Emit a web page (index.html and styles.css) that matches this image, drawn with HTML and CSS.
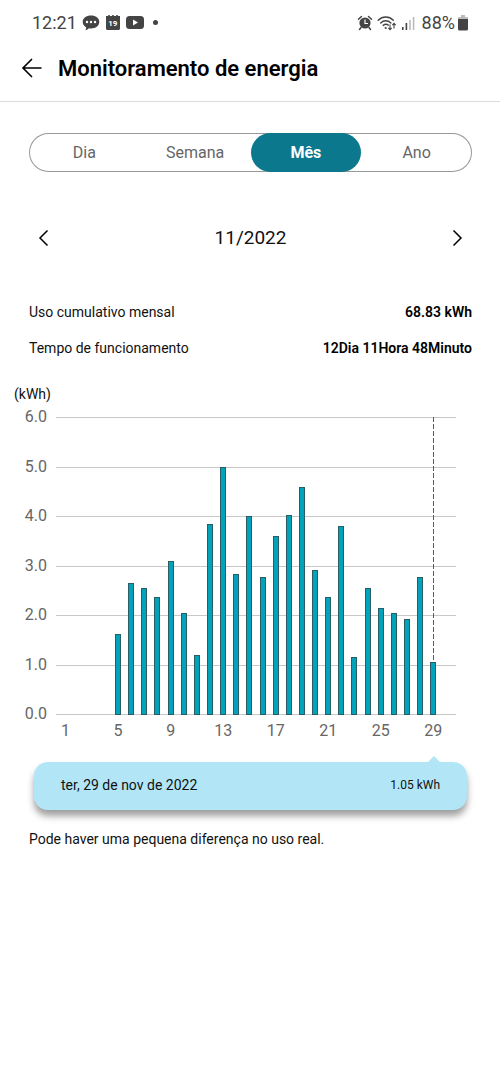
FILE: index.html
```html
<!DOCTYPE html>
<html lang="pt-BR">
<head>
    <meta charset="UTF-8">
    <meta name="viewport" content="width=device-width, initial-scale=1.0">
    <title>Monitoramento de energia</title>
    <link rel="stylesheet" href="styles.css">
</head>
<body>
    <div class="status-bar">
        <div class="status-left">
            <span>12:21</span>
            <svg width="18" height="18" viewBox="0 0 18 18">
                <path d="M9 1.500c4.700 0 8.300 2.700 8.300 6.400s-3.600 6.500-8.300 6.500c-.8 0-1.500-.1-2.200-.2-.8 1-2 1.700-3.300 2 .5-.9.7-1.900.6-2.900C2 12.100.7 10.100.7 7.900.7 4.200 4.300 1.500 9 1.500z" fill="#444"/>
                <circle cx="5" cy="8" r="1.200" fill="#fff"/>
                <circle cx="9" cy="8" r="1.200" fill="#fff"/>
                <circle cx="13" cy="8" r="1.200" fill="#fff"/>
            </svg>
            <span class="calendar">
                <svg width="16" height="18" viewBox="0 0 16 18">
                    <path d="M1 3.500V2h2.200V1h1.600v1h2.400V1h1.600v1h2.400V1h1.600v1H15v12.500a1.500 1.500 0 0 1-1.500 1.500h-11A1.500 1.500 0 0 1 1 14.500z" fill="#444"/>
                </svg>
                <span class="calendar-day">19</span>
            </span>
            <svg width="18" height="18" viewBox="0 0 18 18">
                <rect x="0" y="2" width="18" height="13" rx="3.500" fill="#444"/>
                <path d="M7 5.500l5 3-5 3z" fill="#fff"/>
            </svg>
            <span class="dot"></span>
        </div>
        <div class="status-right">
            <svg width="16" height="18" viewBox="0 0 16 18">
                <circle cx="8" cy="9" r="5.600" fill="#444"/>
                <path d="M1.500 5.200L4.500 2.500M14.500 5.200l-3-2.700M4 13.500L2.500 15.500M12 13.500l1.500 2" stroke="#444" stroke-width="1.500" stroke-linecap="round" fill="none"/>
                <path d="M8 5.500v4h3" stroke="#fff" stroke-width="1.200" fill="none"/>
            </svg>
            <svg width="20" height="18" viewBox="0 0 20 18">
                <g stroke="#444" stroke-width="1.400" stroke-linecap="round" fill="none">
                    <path d="M1.200 6.200c4.300-4.300 10.800-4.300 15.100 0"/>
                    <path d="M3.700 8.900c3-2.900 7.200-2.900 10.200 0"/>
                    <path d="M6.200 11.400c1.600-1.400 3.500-1.500 5.100-.3"/>
                </g>
                <circle cx="8.700" cy="14" r="1.100" fill="#444"/>
                <path d="M13 10.500v5M11.300 13.900l1.700 1.900 1.700-1.900M17 14.500v-5M15.300 11.200L17 9.300l1.700 1.900" stroke="#444" stroke-width="1.100" fill="none"/>
            </svg>
            <svg width="14" height="18" viewBox="0 0 14 18">
                <rect x="1" y="13" width="1.600" height="3" fill="#444"/>
                <rect x="4.600" y="9" width="1.600" height="7" fill="#444"/>
                <rect x="8.200" y="6" width="1.600" height="10" fill="#bbb"/>
                <rect x="11.800" y="3" width="1.600" height="13" fill="#bbb"/>
            </svg>
            <span class="battery-level">88%</span>
            <svg width="12" height="18" viewBox="0 0 12 18">
                <path d="M4 1h4v2h2a1 1 0 0 1 1 1v3H1V4a1 1 0 0 1 1-1h2z" fill="#bbb"/>
                <path d="M1 5h10v10a1.500 1.500 0 0 1-1.500 1.500h-7A1.500 1.500 0 0 1 1 15z" fill="#444"/>
            </svg>
        </div>
    </div>

    <header class="header">
        <button class="icon-button" aria-label="Voltar">
            <svg width="22" height="20" viewBox="0 0 22 20">
                <path d="M20.500 10H2M11 1L2 10l9 9" stroke="#000" stroke-width="1.600" fill="none"/>
            </svg>
        </button>
        <h1>Monitoramento de energia</h1>
    </header>

    <main>
        <nav class="tabs">
            <button class="tab">Dia</button>
            <button class="tab">Semana</button>
            <button class="tab active">Mês</button>
            <button class="tab">Ano</button>
        </nav>

        <div class="period">
            <button class="icon-button" aria-label="Mês anterior">
                <svg width="12" height="18" viewBox="0 0 12 18">
                    <path d="M10.500 1.500L3 9l7.500 7.500" stroke="#000" stroke-width="1.500" fill="none"/>
                </svg>
            </button>
            <span>11/2022</span>
            <button class="icon-button" aria-label="Próximo mês">
                <svg width="12" height="18" viewBox="0 0 12 18">
                    <path d="M1.500 1.500L9 9l-7.500 7.500" stroke="#000" stroke-width="1.500" fill="none"/>
                </svg>
            </button>
        </div>

        <dl class="summary">
            <div class="summary-row">
                <dt>Uso cumulativo mensal</dt>
                <dd>68.83 kWh</dd>
            </div>
            <div class="summary-row">
                <dt>Tempo de funcionamento</dt>
                <dd>12Dia 11Hora 48Minuto</dd>
            </div>
        </dl>

        <section class="chart">
            <div class="unit">(kWh)</div>
            <div class="chart-body">
                <div class="y-axis">
                    <span>6.0</span>
                    <span>5.0</span>
                    <span>4.0</span>
                    <span>3.0</span>
                    <span>2.0</span>
                    <span>1.0</span>
                    <span>0.0</span>
                </div>
                <div class="plot">
                    <div class="lines">
                        <i></i><i></i><i></i><i></i><i></i><i></i><i></i>
                    </div>
                    <!-- one column per day of the month -->
                    <div class="bars">
                        <div class="day"></div>
                        <div class="day"></div>
                        <div class="day"></div>
                        <div class="day"></div>
                        <div class="day"><div class="bar" style="height: 27.2%"></div></div>
                        <div class="day"><div class="bar" style="height: 44.3%"></div></div>
                        <div class="day"><div class="bar" style="height: 42.5%"></div></div>
                        <div class="day"><div class="bar" style="height: 39.5%"></div></div>
                        <div class="day"><div class="bar" style="height: 51.6%"></div></div>
                        <div class="day"><div class="bar" style="height: 34.3%"></div></div>
                        <div class="day"><div class="bar" style="height: 20%"></div></div>
                        <div class="day"><div class="bar" style="height: 64%"></div></div>
                        <div class="day"><div class="bar" style="height: 83.3%"></div></div>
                        <div class="day"><div class="bar" style="height: 47.3%"></div></div>
                        <div class="day"><div class="bar" style="height: 66.7%"></div></div>
                        <div class="day"><div class="bar" style="height: 46.2%"></div></div>
                        <div class="day"><div class="bar" style="height: 60%"></div></div>
                        <div class="day"><div class="bar" style="height: 67%"></div></div>
                        <div class="day"><div class="bar" style="height: 76.5%"></div></div>
                        <div class="day"><div class="bar" style="height: 48.6%"></div></div>
                        <div class="day"><div class="bar" style="height: 39.7%"></div></div>
                        <div class="day"><div class="bar" style="height: 63.5%"></div></div>
                        <div class="day"><div class="bar" style="height: 19.5%"></div></div>
                        <div class="day"><div class="bar" style="height: 42.7%"></div></div>
                        <div class="day"><div class="bar" style="height: 36%"></div></div>
                        <div class="day"><div class="bar" style="height: 34.3%"></div></div>
                        <div class="day"><div class="bar" style="height: 32.3%"></div></div>
                        <div class="day"><div class="bar" style="height: 46.2%"></div></div>
                        <div class="day"><div class="marker"></div><div class="bar" style="height: 17.7%"></div></div>
                        <div class="day"></div>
                    </div>
                </div>
                <div class="x-axis">
                    <span>1</span><span></span><span></span><span></span>
                    <span>5</span><span></span><span></span><span></span>
                    <span>9</span><span></span><span></span><span></span>
                    <span>13</span><span></span><span></span><span></span>
                    <span>17</span><span></span><span></span><span></span>
                    <span>21</span><span></span><span></span><span></span>
                    <span>25</span><span></span><span></span><span></span>
                    <span>29</span><span></span>
                </div>
            </div>
        </section>

        <div class="detail">
            <span>ter, 29 de nov de 2022</span>
            <span class="detail-value">1.05 kWh</span>
        </div>

        <p class="note">Pode haver uma pequena diferença no uso real.</p>
    </main>
</body>
</html>
```

FILE: styles.css
```css
* {
  box-sizing: border-box;
}

body {
  margin: 0;
  background-color: #fff;
  color: #111;
  font-family: Roboto, "Liberation Sans", sans-serif;
  font-size: 14px;
}

button {
  border: none;
  background: none;
  padding: 0;
  font-family: inherit;
  cursor: pointer;
}

svg {
  display: block;
}

/* status bar */
.status-bar {
  display: flex;
  justify-content: space-between;
  height: 45px;
  padding: 0 31px 0 32px;
  color: #444;
  font-size: 18px;
}

.status-left,
.status-right {
  display: flex;
  align-items: center;
  gap: 5px;
}

.status-right {
  gap: 4px;
}

.calendar {
  position: relative;
}

.calendar-day {
  position: absolute;
  left: 0;
  right: 0;
  top: 5px;
  color: #fff;
  font-size: 8px;
  font-weight: 700;
  line-height: 9px;
  text-align: center;
}

.dot {
  width: 5px;
  height: 5px;
  margin-left: 4px;
  border-radius: 50%;
  background-color: #444;
}

.battery-level {
  margin: 0 -2px 0 3px;
}

/* header */
.header {
  display: flex;
  align-items: center;
  gap: 15px;
  height: 57px;
  padding: 0 21px 10px;
  border-bottom: 1px solid #dcdcdc;
}

h1 {
  margin: 0;
  color: #000;
  font-size: 22px;
  font-weight: 600;
}

/* tabs */
.tabs {
  display: flex;
  height: 39px;
  margin: 31px 28px 0 29px;
  border-radius: 20px;
  box-shadow: inset 0 0 0 1px #999;
}

.tab {
  flex: 1;
  border-radius: 20px;
  color: #666;
  font-size: 16px;
}

.tab.active {
  background-color: #0b788e;
  color: #fff;
  font-weight: 700;
}

.period {
  display: flex;
  align-items: center;
  justify-content: space-between;
  margin: 54px 36px 0 37px;
  font-size: 19px;
  line-height: 24px;
}

/* summary */
.summary {
  display: flex;
  flex-direction: column;
  gap: 16px;
  margin: 52px 28px 0 29px;
  line-height: 20px;
}

.summary-row {
  display: flex;
  justify-content: space-between;
}

.summary dd {
  margin: 0;
  color: #000;
  font-weight: 600;
}

/* chart */
.chart {
  margin-top: 26px;
  padding: 0 44px 0 14px;
}

.unit {
  line-height: 20px;
}

.chart-body {
  display: grid;
  grid-template-columns: 33px 1fr;
  column-gap: 9px;
  margin-top: 3px;
  color: #666;
  font-size: 16px;
  line-height: 20px;
}

.y-axis {
  display: flex;
  flex-direction: column;
  justify-content: space-between;
  height: 317px;
  text-align: right;
}

.plot {
  display: grid;
  height: 298px;
  margin-top: 10px;
}

.lines,
.bars {
  grid-area: 1 / 1;
}

.lines {
  display: flex;
  flex-direction: column;
  justify-content: space-between;
}

.lines i {
  height: 1px;
  background-color: #c8c8c8;
}

.bars,
.x-axis {
  display: grid;
  grid-template-columns: repeat(30, 1fr);
  padding: 0 3px;
}

.day {
  display: flex;
  flex-direction: column;
  align-items: center;
  justify-content: flex-end;
  height: 298px;
}

.bar {
  flex: none;
  width: 6px;
  border: 1px solid #2b5d66;
  background-color: #00a3b9;
}

.marker {
  flex: 1;
  width: 1px;
  background: repeating-linear-gradient(#0b788e 0 5px, transparent 5px 7px);
}

.x-axis {
  grid-column: 2;
  margin-top: -3px;
}

.x-axis span {
  display: flex;
  justify-content: center;
  justify-self: center;
  width: 13px;
}

/* selected day */
.detail {
  position: relative;
  display: flex;
  align-items: center;
  justify-content: space-between;
  height: 48px;
  margin: 21px 33px 0 34px;
  padding: 0 27px 2px;
  border-radius: 14px;
  background-color: #b2e6f7;
  box-shadow: 0 6px 7px rgba(0, 0, 0, 0.38);
}

.detail::before {
  content: "";
  position: absolute;
  top: -6px;
  right: 27px;
  border: 6px solid transparent;
  border-top: none;
  border-bottom-color: #b2e6f7;
}

.detail-value {
  font-size: 12px;
}

.note {
  margin: 19px 29px;
  line-height: 20px;
}
```
